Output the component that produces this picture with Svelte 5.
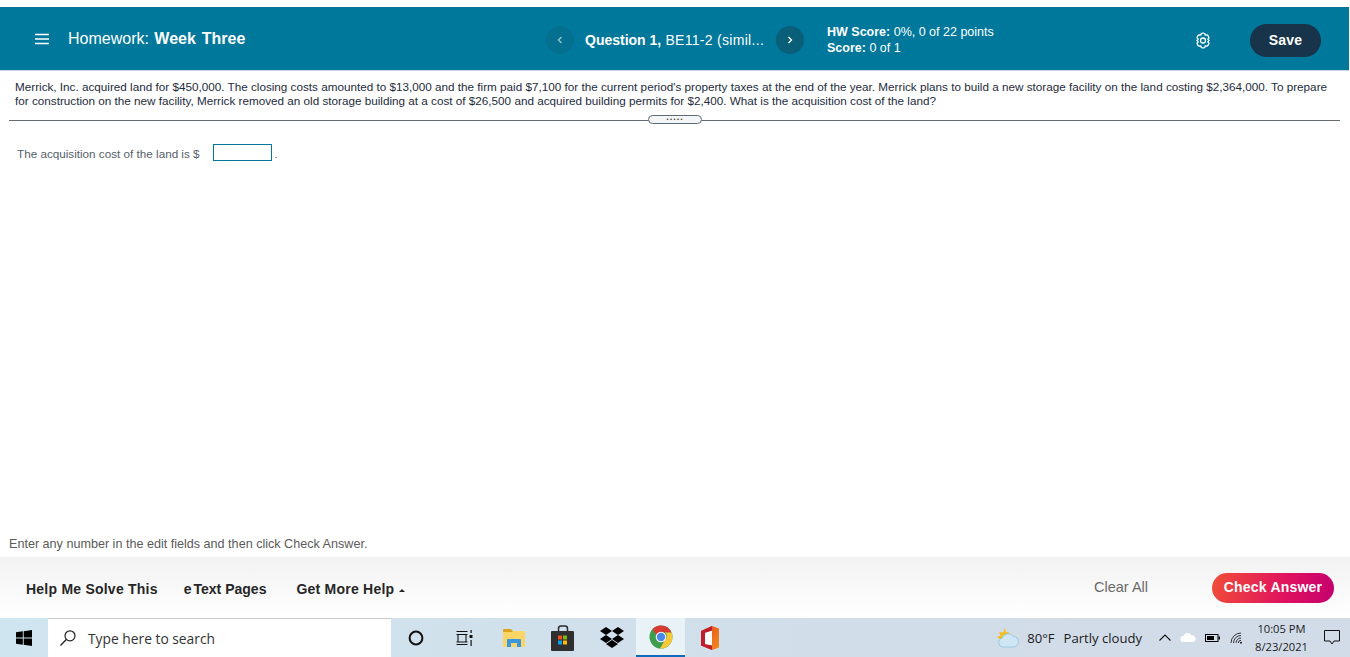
<script lang="ts">
  const apps = ['cortana', 'tasks', 'folder', 'store', 'dropbox', 'chrome', 'office'];
</script>

<div class="page">
  <header class="top">
    <div class="title">
      <svg class="menu" width="14" height="12" viewBox="0 0 14 12"><path d="M0 1.500h14M0 6h14M0 10.500h14" stroke="#fff" stroke-width="1.600" /></svg>
      <span class="name">Homework: <b>Week Three</b></span>
    </div>
    <nav class="pager">
      <button class="round prev" aria-label="Previous">
        <svg width="6" height="8" viewBox="0 0 6 8"><path d="M4.500 1 1.500 4l3 3" fill="none" stroke="#9fc9d6" stroke-width="1.300" /></svg>
      </button>
      <span class="qname"><b>Question 1,</b> BE11-2 (simil...</span>
      <button class="round next" aria-label="Next">
        <svg width="6" height="8" viewBox="0 0 6 8"><path d="M1.500 1l3 3-3 3" fill="none" stroke="#fff" stroke-width="1.300" /></svg>
      </button>
    </nav>
    <div class="score">
      <div><b>HW Score:</b> 0%, 0 of 22 points</div>
      <div><b>Score:</b> 0 of 1</div>
    </div>
    <svg class="gear" width="16" height="17" viewBox="0 0 16 17">
      <path d="M6.300 1.500Q8 .6 9.700 1.500L10.300 3.200 12.100 2.900Q13.700 3.900 14 5.800L12.800 7.100 14 8.500 12.800 9.900 14 11.200Q13.700 13.100 12.100 14.100L10.300 13.800 9.700 15.500Q8 16.400 6.300 15.500L5.700 13.800 3.900 14.100Q2.300 13.100 2 11.200L3.200 9.900 2 8.500 3.200 7.100 2 5.800Q2.300 3.900 3.900 2.900L5.700 3.200z" fill="none" stroke="#fff" stroke-width="1.300" stroke-linejoin="round" />
      <circle cx="8" cy="8.500" r="2.500" fill="none" stroke="#fff" stroke-width="1.300" />
    </svg>
    <button class="save">Save</button>
  </header>

  <section class="question">
    <p>Merrick, Inc. acquired land for $450,000. The closing costs amounted to $13,000 and the firm paid $7,100 for the current period's property taxes at the end of the year. Merrick plans to build a new storage facility on the land costing $2,364,000. To prepare for construction on the new facility, Merrick removed an old storage building at a cost of $26,500 and acquired building permits for $2,400. What is the acquisition cost of the land?</p>
    <div class="divider"><span class="handle">.....</span></div>
  </section>

  <main class="answer">
    <div class="line">
      <span class="label">The acquisition cost of the land is $</span>
      <span class="field"></span>
      <span class="label dot">.</span>
    </div>
  </main>

  <div class="hint">Enter any number in the edit fields and then click Check Answer.</div>

  <footer class="actions">
    <a class="help">Help Me Solve This</a>
    <a class="etext">e<span>Text</span> Pages</a>
    <a class="more">Get More Help <i></i></a>
    <span class="clear">Clear All</span>
    <button class="check">Check Answer</button>
  </footer>

  <div class="taskbar">
    <svg class="win" width="16" height="16" viewBox="0 0 16 16"><path d="M0 2.300 6.800 1.300v6.200H0zM7.700 1.200 16 0v7.500H7.700zM0 8.400h6.800v6.300L0 13.700zM7.700 8.400H16V16l-8.300-1.200z" fill="#000" /></svg>
    <div class="search">
      <svg width="18" height="18" viewBox="0 0 18 18"><circle cx="11" cy="6.800" r="5" fill="none" stroke="#222" stroke-width="1.200" /><path d="M7.300 10.500 1.500 16.500" stroke="#222" stroke-width="1.300" /></svg>
      <span>Type here to search</span>
    </div>
    <div class="apps">
      {#each apps as app}
        <div class="app {app}">
          {#if app === 'cortana'}
            <svg width="16" height="16" viewBox="0 0 16 16"><circle cx="8" cy="8" r="6.400" fill="none" stroke="#111" stroke-width="2" /></svg>
          {:else if app === 'tasks'}
            <svg width="17" height="16" viewBox="0 0 17 16"><path d="M.5 1.500h11M.5 14.500h11M.5 12h11M2 4.500h8V12H2zM.5 4.500h11" fill="none" stroke="#111" stroke-width="1.100" /><path d="M14.500 0h1.200v3h-1.200zM13.500 5h3v3h-3zM14.500 10h1.200v6h-1.200z" fill="#111" /></svg>
          {:else if app === 'folder'}
            <svg width="22" height="18" viewBox="0 0 22 18"><path d="M0 1q0-1 1-1h7l2 2v2H0z" fill="#dfa41f" /><path d="M0 3h9l1-1h12v15q0 1-1 1H1q-1 0-1-1z" fill="#fbd667" /><path d="M4 18v-7q0-1 1-1h12q1 0 1 1v7h-4v-4H8v4z" fill="#3a96dd" /></svg>
          {:else if app === 'store'}
            <svg width="24" height="26" viewBox="0 0 24 26"><path d="M7.500 7V3.500Q7.500 1 10 1h4q2.500 0 2.500 2.500V7" fill="none" stroke="#2b2b2b" stroke-width="1.500" /><rect y="6" width="23" height="20" rx="1" fill="#2f2f2f" /><path d="M7 10.500h4v4H7z" fill="#f25022" /><path d="M12 10.500h4v4h-4z" fill="#7fba00" /><path d="M7 15.500h4v4H7z" fill="#00a4ef" /><path d="M12 15.500h4v4h-4z" fill="#ffb900" /></svg>
          {:else if app === 'dropbox'}
            <svg width="24" height="21" viewBox="0 0 24 21"><path d="M6 0l6 4-6 4-6-4zM18 0l6 4-6 4-6-4zM6 8l6 4-6 4-6-4zM18 8l6 4-6 4-6-4zM12 13l6 4-6 4-6-4z" fill="#000" /></svg>
          {:else if app === 'chrome'}
            <svg width="24" height="24" viewBox="0 0 24 24">
              <circle cx="12" cy="12" r="11.500" fill="#3f9d4e" />
              <path d="M12 .5A11.500 11.500 0 0 1 22.500 7.500H12a4.500 4.500 0 0 0-4.300 3L3.500 4A11.500 11.500 0 0 1 12 .5z" fill="#d93a32" />
              <path d="M22.500 7.500A11.500 11.500 0 0 1 11 23.500l5-8.500a4.500 4.500 0 0 0 0-7.500z" fill="#fbc838" />
              <circle cx="12" cy="12" r="5.300" fill="#fff" /><circle cx="12" cy="12" r="4.200" fill="#4a88ee" />
            </svg>
          {:else}
            <svg width="18" height="24" viewBox="0 0 18 24">
              <defs>
                <linearGradient id="off" x1="0" x2="1" y1="0" y2="1"><stop offset="0" stop-color="#e64a19" /><stop offset="1" stop-color="#f28c1e" /></linearGradient>
              </defs>
              <path d="M0 5 11 0l7 2.500v19L11 24 0 19.500z" fill="url(#off)" />
              <path d="M11 4.500v15l-7-1.200V6.800z" fill="#fff" />
              <path d="M0 5 11 0v4.500L4 6.800v11.500l7 1.200V24L0 19.500z" fill="#bf1e2e" />
            </svg>
          {/if}
        </div>
      {/each}
    </div>
    <div class="tray">
      <svg class="weather" width="23" height="20" viewBox="0 0 23 20">
        <path d="M9 0 10 4l3.500.5L9 10l-4 2-4-3 3.500-1.500L3 4l4 .5z" fill="#f4bf1f" />
        <path d="M7 19a4.500 4.500 0 0 1-1-8.800 6.500 6.500 0 0 1 11.500-1.700A5.300 5.300 0 0 1 18 19z" fill="#cfe6f5" stroke="#8fc0de" stroke-width=".8" />
      </svg>
      <span class="temp">80°F</span>
      <span class="cond">Partly cloudy</span>
      <svg class="caret" width="12" height="7" viewBox="0 0 12 7"><path d="M.5 6.500 6 1l5.500 5.500" fill="none" stroke="#111" stroke-width="1.100" /></svg>
      <svg class="cloud" width="16" height="9" viewBox="0 0 16 9"><path d="M3.500 9a3 3 0 0 1-.3-6 4.500 4.500 0 0 1 8.300-.5A3.300 3.300 0 0 1 13 9z" fill="#fff" /></svg>
      <svg class="battery" width="15" height="8" viewBox="0 0 15 8"><rect x=".5" y=".5" width="12.500" height="7" fill="none" stroke="#000" /><rect x="2" y="2" width="7" height="4" fill="#000" /><rect x="13.500" y="2.500" width="1.500" height="3" fill="#000" /></svg>
      <svg class="wifi" width="13" height="12" viewBox="0 0 13 12"><path d="M1 11a10 10 0 0 1 10-10M3.500 11A7.500 7.500 0 0 1 11 3.500M6 11a5 5 0 0 1 5-5M8.300 11A2.700 2.700 0 0 1 11 8.300" fill="none" stroke="#222" stroke-width=".9" /><circle cx="11" cy="10.800" r="1" fill="#222" /></svg>
      <div class="clock"><span>10:05 PM</span><span>8/23/2021</span></div>
      <svg class="notify" width="16" height="15" viewBox="0 0 16 15"><path d="M.5.500h15v10.500H10l-2 3-2-3H.5z" fill="none" stroke="#111" stroke-width="1" /></svg>
    </div>
  </div>
</div>

<style>
  :global(body) {
    margin: 0;
    background: #fff;
  }

  .page {
    width: 1350px;
    height: 657px;
    display: flex;
    flex-direction: column;
    padding-top: 7px;
    box-sizing: border-box;
    overflow: hidden;
    font-family: "Liberation Sans", Arial, sans-serif;
  }

  button {
    border: 0;
    padding: 0;
    font: inherit;
    display: flex;
    align-items: center;
    justify-content: center;
  }

  .top {
    height: 60px;
    padding-top: 3px;
    width: 1349px;
    flex: none;
    display: flex;
    align-items: center;
    background: #00789c;
    border-bottom: 1px solid #c9d5e6;
    box-sizing: content-box;
    color: #fff;
  }

  .title {
    display: flex;
    align-items: center;
    width: 545px;
    margin-top: -2px;
  }

  .menu {
    margin-left: 35px;
    margin-right: 19px;
  }

  .name {
    font-size: 16px;
    white-space: nowrap;
  }

  .name b {
    margin-left: 1px;
    word-spacing: 1.500px;
  }

  .pager {
    display: flex;
    align-items: center;
    width: 282px;
  }

  .round {
    width: 28px;
    height: 28px;
    border-radius: 50%;
    flex: none;
  }

  .prev { background: #04708f; margin-left: 1px; }
  .next { background: #095e78; }

  .qname {
    font-size: 14px;
    width: 191px;
    margin-left: 11px;
    white-space: nowrap;
    letter-spacing: .3px;
  }

  .qname b {
    letter-spacing: 0;
  }

  .score {
    font-size: 12.500px;
    line-height: 16px;
    width: 368px;
    margin-top: -1px;
    white-space: nowrap;
  }

  .gear {
    margin-right: 39px;
  }

  .save {
    width: 71px;
    height: 33px;
    border-radius: 17px;
    background: #17344a;
    color: #fff;
    font-size: 14px;
    font-weight: 700;
    letter-spacing: .2px;
  }

  .question {
    flex: none;
    padding: 9px 10px 0 9px;
  }

  .question p {
    margin: 0;
    padding-left: 6px;
    font-size: 11.710px;
    line-height: 14px;
    color: #1e2b3c;
    width: 1320px;
  }

  .divider {
    position: relative;
    height: 1px;
    margin-top: 12px;
    background: #666c72;
  }

  .handle {
    position: absolute;
    left: 639px;
    top: -5px;
    width: 52px;
    height: 7px;
    background: #f3f5f7;
    border: 1px solid #5a6b7b;
    border-radius: 5px;
    font-size: 9px;
    line-height: 3px;
    font-weight: 700;
    letter-spacing: 1px;
    text-align: center;
    color: #444;
  }

  .answer {
    flex: 1;
    padding: 23px 0 0 17px;
  }

  .line {
    display: flex;
    align-items: flex-start;
    font-size: 11.700px;
    color: #56606b;
  }

  .label {
    margin-top: 3px;
  }

  .field {
    width: 57px;
    height: 15px;
    margin-left: 13px;
    border: 1px solid #00789c;
    background: #fff;
  }

  .dot {
    margin-left: 3px;
  }

  .hint {
    flex: none;
    height: 20px;
    padding-left: 9px;
    font-size: 12.600px;
    line-height: 14px;
    color: #5a5a5a;
  }

  .actions {
    flex: none;
    height: 61px;
    padding-top: 2px;
    display: flex;
    align-items: center;
    box-sizing: border-box;
    background: linear-gradient(#f2f2f2, #fff);
    font-size: 14px;
    font-weight: 700;
    letter-spacing: .23px;
    color: #262626;
  }

  .help { margin-left: 26px; }
  .etext { margin-left: 26px; letter-spacing: 0; }
  .etext span { margin-left: 2px; }
  .more { margin-left: 30px; }

  .more i {
    display: inline-block;
    margin-left: 1px;
    vertical-align: 2px;
    border: 3px solid transparent;
    border-top: 0;
    border-bottom: 3px solid #262626;
  }

  .clear {
    margin-left: auto;
    font-size: 14.500px;
    font-weight: 400;
    letter-spacing: 0;
    color: #6a6a6a;
    position: relative;
    top: -2px;
  }

  .check {
    width: 122px;
    height: 30px;
    padding-bottom: 2px;
    margin: -2px 16px 0 64px;
    border-radius: 15px;
    background: linear-gradient(100deg, #f04e37, #e0125f 60%, #c4006e);
    color: #fff;
    font-size: 14px;
    font-weight: 700;
    letter-spacing: .2px;
  }

  .taskbar {
    flex: none;
    height: 39px;
    display: flex;
    align-items: center;
    background: linear-gradient(90deg, #cfe5ef, #d2dce9 80%);
    font-family: "Open Sans", sans-serif;
    color: #1b1b1b;
  }

  .win {
    margin: 0 16px;
  }

  .search {
    width: 343px;
    height: 39px;
    display: flex;
    align-items: center;
    gap: 11px;
    padding-left: 11px;
    box-sizing: border-box;
    background: #fff;
    border-top: 1px solid #c8c8c8;
    font-size: 13.800px;
    color: #333;
  }

  .apps {
    display: flex;
    margin-left: 2px;
    margin-right: -2px;
  }

  .app {
    width: 49px;
    height: 39px;
    display: flex;
    align-items: center;
    justify-content: center;
    box-sizing: border-box;
  }

  .cortana { margin-left: -2px; }

  .chrome {
    background: #e9f2f6;
    border-bottom: 2px solid #0f6cbd;
  }

  .tray {
    margin-left: auto;
    display: flex;
    align-items: center;
    font-size: 13.100px;
  }

  .temp { margin-left: 8px; }
  .cond { margin-left: 9px; }
  .caret { margin-left: 17px; }
  .cloud { margin-left: 9px; }
  .battery { margin-left: 9px; }
  .wifi { margin-left: 10px; }

  .clock {
    display: flex;
    flex-direction: column;
    align-items: center;
    margin-left: 12px;
    font-size: 11.200px;
    line-height: 18px;
  }

  .notify {
    margin: 0 10px 0 16px;
  }
</style>
